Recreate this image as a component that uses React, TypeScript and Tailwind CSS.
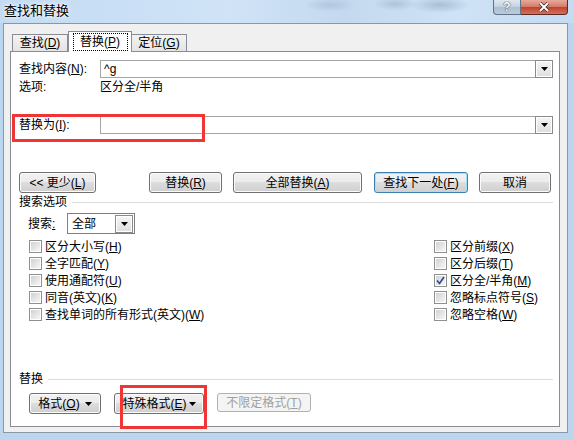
import React from "react";

const FONT = "font-['Liberation_Sans','Noto_Sans_CJK_SC',sans-serif]";

const btnBase =
  "h-[21px] rounded-[3px] border bg-[linear-gradient(to_bottom,#f2f2f2_0%,#ebebeb_50%,#dddddd_50%,#cfcfcf_100%)] flex items-center justify-center leading-none";
const btn = `${btnBase} border-[#707070] shadow-[inset_0_0_0_1px_#fbfbfb]`;
const btnFocus = `${btnBase} border-[#3c7fb1] shadow-[inset_0_0_0_1px_#a6dff9]`;

function Arrow() {
  return (
    <svg width="7" height="4" viewBox="0 0 7 4" className="shrink-0">
      <path d="M0 0h7L3.5 4z" fill="#000" />
    </svg>
  );
}

function DropButton({ className = "" }: { className?: string }) {
  return (
    <div
      className={
        "w-[18px] h-[18px] border border-[#8a8a8a] bg-[linear-gradient(to_bottom,#f6f6f6,#dedede)] shadow-[inset_0_0_0_1px_#ffffff] flex items-center justify-center " +
        className
      }
    >
      <Arrow />
    </div>
  );
}

function Combo({ text }: { text?: string }) {
  return (
    <div className="flex-1 h-[18px] border border-[#a5a5a5] bg-white flex items-center">
      <span className="pl-[3px] flex-1 leading-none">{text}</span>
      <DropButton className="-mr-px -my-px" />
    </div>
  );
}

function Check({ label, checked = false }: { label: React.ReactNode; checked?: boolean }) {
  return (
    <div className="h-[17px] flex items-center">
      <div className="w-[13px] h-[13px] border border-[#8e8f8f] bg-white p-px shrink-0">
        <div className="w-full h-full bg-[linear-gradient(135deg,#d2d2d2,#f6f6f6)] flex items-center justify-center">
          {checked && (
            <svg width="9" height="9" viewBox="0 0 9 9">
              <path d="M1 4.5 L3.5 7.5 L8 1" stroke="#2d4a8c" strokeWidth="1.6" fill="none" />
            </svg>
          )}
        </div>
      </div>
      <span className="ml-[3px] leading-none whitespace-nowrap">{label}</span>
    </div>
  );
}

function Key({ k }: { k: string }) {
  return (
    <>
      (<span className="underline underline-offset-1">{k}</span>)
    </>
  );
}

export default function App() {
  return (
    <div
      className={`w-[574px] h-[440px] overflow-hidden bg-[#bdd6f0] flex flex-col text-[12px] text-black ${FONT}`}
    >
      {/* title bar */}
      <div className="h-[23px] flex items-start bg-[radial-gradient(ellipse_30px_8px_at_440px_5px,#a9bfd6,transparent),radial-gradient(ellipse_22px_7px_at_395px_4px,#aec3da,transparent),radial-gradient(ellipse_26px_7px_at_330px_5px,#b2c7dd,transparent),linear-gradient(to_right,#c3dbf3,#d0e3f7_40%,#c4d9ef_60%,#cfe2f6_80%,#c4dbf2)]">
        <div className="pl-[4px] pt-[3px] text-[13px] leading-[16px] [text-shadow:0_0_6px_#ffffff,0_0_3px_#ffffff]">
          查找和替换
        </div>
        <div className="ml-auto mr-[6px] flex">
          <div className="w-[28px] h-[15px] border border-t-0 border-[#5f7389] rounded-bl-[4px] bg-[linear-gradient(to_bottom,#dfe8f1,#c3d1df_50%,#aebfd2_50%,#bccbdb)] flex items-center justify-center">
            <span className="text-[12px] font-bold leading-none text-white [text-shadow:0_0_1px_#333,0_0_1px_#333]">?</span>
          </div>
          <div className="w-[47px] h-[15px] border border-t-0 border-l-0 border-[#5a2a27] rounded-br-[4px] bg-[linear-gradient(to_bottom,#e9a99c,#d47967_50%,#c2402c_50%,#d3715a)] flex items-center justify-center">
            <svg width="12" height="10" viewBox="0 0 12 10">
              <path d="M2 1 L10 9 M10 1 L2 9" stroke="#3b2424" strokeWidth="3.4" />
              <path d="M2 1 L10 9 M10 1 L2 9" stroke="#ffffff" strokeWidth="2" />
            </svg>
          </div>
        </div>
      </div>

      {/* client area */}
      <div className="ml-[3px] mr-[6px] h-[410px] border border-[#8a97a6] bg-[#f0f0f0] pt-[7px] pl-[6px] pr-[7px] pb-[5px] flex flex-col">
        {/* tabs */}
        <div className="flex items-end pl-[2px]">
          <div className="w-[56px] h-[17px] border border-b-0 border-[#898c95] bg-[linear-gradient(to_bottom,#f3f3f3,#e4e4e4)] flex items-center justify-center leading-none">
            查找<Key k="D" />
          </div>
          <div className="relative z-10 w-[64px] h-[21px] -mb-px border border-b-0 border-[#898c95] bg-white flex items-start justify-center pt-[1px]">
            <span className="w-[55px] h-[18px] border border-dotted border-black flex items-center justify-center leading-none">
              替换<Key k="P" />
            </span>
          </div>
          <div className="w-[55px] h-[17px] border border-b-0 border-l-0 border-[#898c95] bg-[linear-gradient(to_bottom,#f3f3f3,#e4e4e4)] flex items-center justify-center leading-none">
            定位<Key k="G" />
          </div>
        </div>

        {/* panel */}
        <div className="relative flex-1 border border-[#898c95] bg-white pl-[8px] pr-[6px] flex flex-col">
          <div className="mt-[8px] h-[18px] flex items-center">
            <span className="w-[81px] leading-none">
              查找内容<Key k="N" />:
            </span>
            <Combo text="^g" />
          </div>
          <div className="h-[17px] flex items-center">
            <span className="w-[81px] leading-none">选项:</span>
            <span className="leading-none">区分全/半角</span>
          </div>
          <div className="mt-[21px] h-[18px] flex items-center">
            <span className="w-[81px] leading-none">
              替换为<Key k="I" />:
            </span>
            <Combo />
          </div>

          {/* action buttons */}
          <div className="mt-[38px] flex">
            <div className={`${btn} w-[77px]`}>&lt;&lt; 更少<Key k="L" /></div>
            <div className={`${btn} w-[73px] ml-[53px]`}>替换<Key k="R" /></div>
            <div className={`${btn} w-[129px] ml-[11px]`}>全部替换<Key k="A" /></div>
            <div className={`${btnFocus} w-[94px] ml-[12px]`}>
              查找下一处<Key k="F" />
            </div>
            <div className={`${btn} w-[72px] ml-[11px]`}>取消</div>
          </div>

          {/* search options */}
          <div className="h-[16px] mt-px flex items-center">
            <span className="leading-none">搜索选项</span>
            <div className="flex-1 h-px bg-[#dcdcdc] ml-[5px]" />
          </div>
          <div className="mt-[3px] h-[21px] flex items-center pl-[9px]">
            <span className="w-[39px] leading-none">
              搜索<span className="underline underline-offset-1">:</span>
            </span>
            <div className="w-[68px] h-[21px] border border-[#7f7f7f] bg-white flex items-center pr-[1px]">
              <span className="flex-1 pl-[4px] leading-none">全部</span>
              <DropButton className="w-[16px] h-[17px]" />
            </div>
          </div>

          <div className="mt-[4px] flex">
            <div className="flex-1 pl-[10px] flex flex-col">
              <Check label={<>区分大小写<Key k="H" /></>} />
              <Check label={<>全字匹配<Key k="Y" /></>} />
              <Check label={<>使用通配符<Key k="U" /></>} />
              <Check label={<>同音(英文)<Key k="K" /></>} />
              <Check label={<>查找单词的所有形式(英文)<Key k="W" /></>} />
            </div>
            <div className="w-[119px] flex flex-col">
              <Check label={<>区分前缀<Key k="X" /></>} />
              <Check label={<>区分后缀<Key k="T" /></>} />
              <Check checked label={<>区分全/半角<Key k="M" /></>} />
              <Check label={<>忽略标点符号<Key k="S" /></>} />
              <Check label={<>忽略空格<Key k="W" /></>} />
            </div>
          </div>

          {/* replace section */}
          <div className="mt-[48px] h-[16px] flex items-center">
            <span className="leading-none">替换</span>
            <div className="flex-1 h-px bg-[#dcdcdc] ml-[5px]" />
          </div>
          <div className="mt-[6px] flex pl-[10px]">
            <div className={`${btn} h-[19px] w-[72px] gap-[5px]`}>
              <span>格式<Key k="O" /></span>
              <Arrow />
            </div>
            <div className={`${btn} h-[19px] w-[90px] ml-[13px] gap-[2px]`}>
              <span>特殊格式<Key k="E" /></span>
              <Arrow />
            </div>
            <div className="h-[19px] w-[94px] ml-[13px] rounded-[3px] border border-[#adb2b5] bg-[#f4f4f4] text-[#a0a0a0] flex items-center justify-center leading-none">
              不限定格式<Key k="T" />
            </div>
          </div>

          {/* annotation boxes */}
          <div className="absolute left-[1px] top-[62px] w-[193px] h-[28px] border-[3px] border-[#f03535]" />
          <div className="absolute left-[109px] top-[333px] w-[87px] h-[44px] border-[3px] border-[#f03535]" />
        </div>
      </div>
    </div>
  );
}
